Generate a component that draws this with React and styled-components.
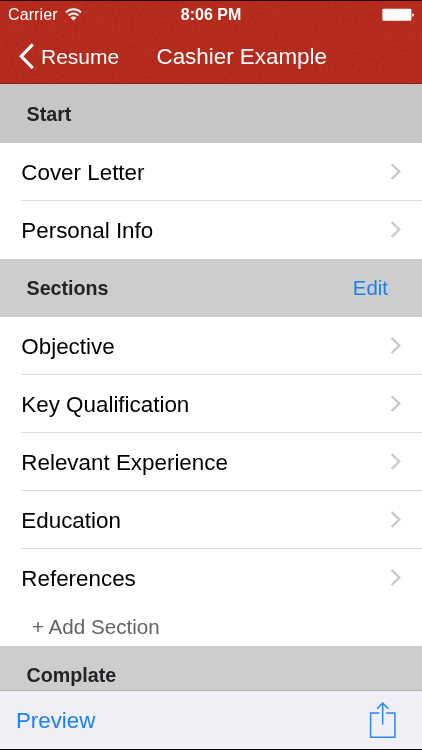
import React from 'react'
import styled, { createGlobalStyle } from 'styled-components'

const startItems = ['Cover Letter', 'Personal Info']
const sectionItems = ['Objective', 'Key Qualification', 'Relevant Experience', 'Education', 'References']

const Chevron = () => (
    <ChevronIcon viewBox="0 0 12 20">
        <path d="M1.6 2 9.2 9.5 1.6 17" />
    </ChevronIcon>
)

const List = ({ items }) => (
    <Rows>
        {items.map((item) => (
            <Row key={item}>
                <span>{item}</span>
                <Chevron />
            </Row>
        ))}
    </Rows>
)

const App = () => {
    return (
        <Container>
            <GlobalStyle />
            <Header>
                <Texture>
                    <filter id="leather" x="0" y="0" width="100%" height="100%" colorInterpolationFilters="sRGB">
                        <feTurbulence type="fractalNoise" baseFrequency="0.3" numOctaves="3" seed="4" />
                        <feDiffuseLighting lightingColor="#fff" surfaceScale="1">
                            <feDistantLight azimuth="225" elevation="30" />
                        </feDiffuseLighting>
                    </filter>
                    <rect width="100%" height="100%" filter="url(#leather)" />
                </Texture>
                <StatusBar>
                    <Carrier>
                        Carrier
                        <svg width="17" height="13" viewBox="0 0 17 13" fill="none" stroke="#fff" strokeWidth="2">
                            <path d="M1 4.4A10.6 10.6 0 0 1 16 4.4" />
                            <path d="M3.7 7.5A6.8 6.8 0 0 1 13.3 7.5" />
                            <path d="M8.5 12.6 5.6 9.8A4 4 0 0 1 11.4 9.8Z" fill="#fff" stroke="none" />
                        </svg>
                    </Carrier>
                    <Time>8:06 PM</Time>
                    <Battery width="33" height="14" viewBox="0 0 33 14" fill="#fff">
                        <rect x="0.4" y="0.8" width="29" height="12" rx="1.2" />
                        <path d="M30.3 5.2Q32 5.6 32 7T30.3 8.8Z" />
                    </Battery>
                </StatusBar>
                <NavBar>
                    <Back>
                        <svg width="16" height="27" viewBox="0 0 16 27" fill="none" stroke="#fff" strokeWidth="3.1">
                            <path d="M13.8 1.4 2.2 13.3 13.8 25.2" />
                        </svg>
                        <span>Resume</span>
                    </Back>
                    <Title>Cashier Example</Title>
                </NavBar>
            </Header>
            <SectionHeader $first>Start</SectionHeader>
            <List items={startItems} />
            <SectionHeader>
                Sections
                <Edit>Edit</Edit>
            </SectionHeader>
            <List items={sectionItems} />
            <AddSection>+ Add Section</AddSection>
            <SectionHeader $cut>Complate</SectionHeader>
            <Toolbar>
                <Preview>Preview</Preview>
                <svg width="28" height="38" viewBox="0 0 28 38" fill="none" stroke="#2a86f0" strokeWidth="1.5">
                    <path d="M10.2 12H1.6V36.2H25.9V12H17.2" />
                    <path d="M13.7 23.4V2.3M8 7.8 13.7 2.1 19.4 7.8" />
                </svg>
            </Toolbar>
        </Container>
    )
}

export default App

const GlobalStyle = createGlobalStyle`
body {
    margin: 0;
}
* {
    box-sizing: border-box;
}
`
const Container = styled.div`
width: 422px;
height: 750px;
display: flex;
flex-direction: column;
background: #fff;
color: #000;
font-family: "Liberation Sans", Arial, sans-serif;
white-space: nowrap;
overflow: hidden;
`
const Header = styled.header`
position: relative;
height: 84px;
flex: none;
background: #b52b1d;
border-top: 1px solid #2b0508;
border-bottom: 1px solid #81221a;
color: #fff;
`
const Texture = styled.svg`
position: absolute;
inset: 0;
width: 100%;
height: 100%;
mix-blend-mode: soft-light;
opacity: 0.13;
`
const StatusBar = styled.div`
position: relative;
display: grid;
grid-template-columns: 1fr auto 1fr;
align-items: center;
height: 28px;
padding: 0 8px;
font-size: 16px;
`
const Carrier = styled.div`
display: flex;
align-items: center;
gap: 7px;
letter-spacing: 0.1px;
svg {
    margin-top: -2px;
}
`
const Time = styled.div`
font-weight: bold;
`
const Battery = styled.svg`
justify-self: end;
margin-right: -1px;
`
const NavBar = styled.div`
position: relative;
display: flex;
align-items: center;
height: 54px;
padding-left: 19px;
`
const Back = styled.div`
display: flex;
align-items: center;
gap: 6px;
width: 137.5px;
font-size: 21px;
span {
    padding-top: 1px;
}
`
const Title = styled.div`
padding-top: 2px;
font-size: 22.4px;
`
const SectionHeader = styled.div`
display: flex;
align-items: center;
justify-content: space-between;
flex: none;
height: ${({ $first, $cut }) => ($first ? 59 : $cut ? 44 : 58)}px;
padding: ${({ $first, $cut }) => ($cut ? 14 : $first ? 0 : 1)}px 34px 0 26.5px;
background: ${({ $first }) => ($first ? '#c6c6c6' : '#cdcdcd')};
border-top: ${({ $first }) => ($first ? '1px solid #dcb9b6' : 'none')};
color: #222326;
font-size: 19.7px;
font-weight: bold;
`
const Edit = styled.span`
color: #1c7fee;
font-size: 20.4px;
font-weight: normal;
`
const Rows = styled.div`
flex: none;
`
const Row = styled.div`
display: flex;
align-items: center;
justify-content: space-between;
height: 58px;
margin-left: 21px;
padding-right: 20px;
border-bottom: 1px solid #dedede;
font-size: 22.4px;
&:last-child {
    border-color: transparent;
}
span {
    padding: 2px 0 0 0.3px;
}
`
const ChevronIcon = styled.svg`
width: 12px;
height: 20px;
fill: none;
stroke: #c7c7cc;
stroke-width: 2.4;
`
const AddSection = styled.div`
flex: none;
height: 39px;
padding-left: 32px;
line-height: 40px;
color: #626366;
font-size: 20.6px;
`
const Toolbar = styled.footer`
display: flex;
align-items: center;
justify-content: space-between;
flex: none;
height: 60px;
padding: 0 25px 0 16px;
background: #efeff5;
border-top: 1px solid #b2b2b4;
border-bottom: 1px solid #08080c;
`
const Preview = styled.span`
padding-top: 2px;
color: #1a80f5;
font-size: 22.3px;
`
